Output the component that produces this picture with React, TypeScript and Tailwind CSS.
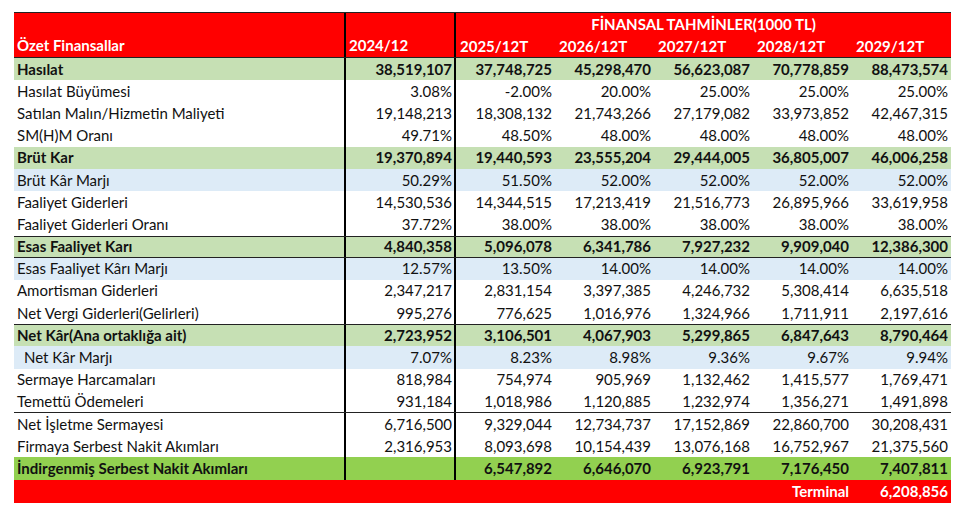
import React from "react"

type Row = {
  label: string
  values: string[]
  kind?: "total" | "ratio" | "fcf"
  indent?: boolean
  borderTop?: boolean
  borderBottom?: boolean
}

const years = ["2025/12T", "2026/12T", "2027/12T", "2028/12T", "2029/12T"]

const rows: Row[] = [
  { label: "Hasılat", kind: "total", values: ["38,519,107", "37,748,725", "45,298,470", "56,623,087", "70,778,859", "88,473,574"] },
  { label: "Hasılat Büyümesi", values: ["3.08%", "-2.00%", "20.00%", "25.00%", "25.00%", "25.00%"] },
  { label: "Satılan Malın/Hizmetin Maliyeti", values: ["19,148,213", "18,308,132", "21,743,266", "27,179,082", "33,973,852", "42,467,315"] },
  { label: "SM(H)M Oranı", values: ["49.71%", "48.50%", "48.00%", "48.00%", "48.00%", "48.00%"] },
  { label: "Brüt Kar", kind: "total", values: ["19,370,894", "19,440,593", "23,555,204", "29,444,005", "36,805,007", "46,006,258"] },
  { label: "Brüt Kâr Marjı", kind: "ratio", values: ["50.29%", "51.50%", "52.00%", "52.00%", "52.00%", "52.00%"] },
  { label: "Faaliyet Giderleri", values: ["14,530,536", "14,344,515", "17,213,419", "21,516,773", "26,895,966", "33,619,958"] },
  { label: "Faaliyet Giderleri Oranı", values: ["37.72%", "38.00%", "38.00%", "38.00%", "38.00%", "38.00%"] },
  { label: "Esas Faaliyet Karı", kind: "total", borderTop: true, borderBottom: true, values: ["4,840,358", "5,096,078", "6,341,786", "7,927,232", "9,909,040", "12,386,300"] },
  { label: "Esas Faaliyet Kârı Marjı", kind: "ratio", values: ["12.57%", "13.50%", "14.00%", "14.00%", "14.00%", "14.00%"] },
  { label: "Amortisman Giderleri", values: ["2,347,217", "2,831,154", "3,397,385", "4,246,732", "5,308,414", "6,635,518"] },
  { label: "Net Vergi Giderleri(Gelirleri)", values: ["995,276", "776,625", "1,016,976", "1,324,966", "1,711,911", "2,197,616"] },
  { label: "Net Kâr(Ana ortaklığa ait)", kind: "total", borderTop: true, values: ["2,723,952", "3,106,501", "4,067,903", "5,299,865", "6,847,643", "8,790,464"] },
  { label: "Net Kâr Marjı", kind: "ratio", indent: true, values: ["7.07%", "8.23%", "8.98%", "9.36%", "9.67%", "9.94%"] },
  { label: "Sermaye Harcamaları", values: ["818,984", "754,974", "905,969", "1,132,462", "1,415,577", "1,769,471"] },
  { label: "Temettü Ödemeleri", borderBottom: true, values: ["931,184", "1,018,986", "1,120,885", "1,232,974", "1,356,271", "1,491,898"] },
  { label: "Net İşletme Sermayesi", values: ["6,716,500", "9,329,044", "12,734,737", "17,152,869", "22,860,700", "30,208,431"] },
  { label: "Firmaya Serbest Nakit Akımları", values: ["2,316,953", "8,093,698", "10,154,439", "13,076,168", "16,752,967", "21,375,560"] },
  { label: "İndirgenmiş Serbest Nakit Akımları", kind: "fcf", values: ["", "6,547,892", "6,646,070", "6,923,791", "7,176,450", "7,407,811"] },
]

const rowBg = (kind?: Row["kind"]) => {
  if (kind === "total") return "bg-[#c6e0b4] font-bold"
  if (kind === "ratio") return "bg-[#ddebf7]"
  if (kind === "fcf") return "bg-[#92d050] font-bold"
  return "bg-white"
}

function DataRow({ row }: { row: Row }) {
  return (
    <div
      className={
        "grid h-[22.2px] grid-cols-[332px_110px_repeat(5,99px)] items-center leading-none " +
        rowBg(row.kind) +
        (row.borderTop ? " border-t border-[#222]" : "") +
        (row.borderBottom ? " border-b border-[#222]" : "")
      }
    >
      <div className={"flex h-full items-center border-r-2 border-black " + (row.indent ? "pl-[10px]" : "pl-[3px]")}>
        {row.label}
      </div>
      <div className="flex h-full items-center justify-end border-r-2 border-black pr-[2px]">{row.values[0]}</div>
      {row.values.slice(1).map((v, i) => (
        <div key={i} className="pr-[3px] text-right">
          {v}
        </div>
      ))}
    </div>
  )
}

export default function App() {
  return (
    <div className="min-h-[509px] bg-white pl-[14px] pt-[12px] text-[15px] text-[#111]" style={{ fontFamily: "Lato, 'Liberation Sans', sans-serif" }}>
      <div className="w-[937px]">
        {/* Header */}
        <div className="grid grid-cols-[332px_110px_repeat(5,99px)] grid-rows-[22px_22px] border-y border-[#222] bg-[#ff0000] font-bold leading-none text-white">
          <div className="row-span-2 flex items-end border-r-2 border-black pb-[4px] pl-[3px]">Özet Finansallar</div>
          <div className="row-span-2 flex items-end border-r-2 border-black pb-[4px] pl-[3px]">2024/12</div>
          <div className="col-span-5 flex items-center justify-center">FİNANSAL TAHMİNLER(1000 TL)</div>
          {years.map((y) => (
            <div key={y} className="flex items-center pl-[4px]">
              {y}
            </div>
          ))}
        </div>

        {rows.map((row) => (
          <DataRow key={row.label} row={row} />
        ))}

        {/* Terminal */}
        <div className="grid h-[23px] grid-cols-[332px_110px_repeat(5,99px)] items-center bg-[#ff0000] font-bold leading-none text-white">
          <div />
          <div />
          <div />
          <div />
          <div />
          <div className="pr-[3px] text-right">Terminal</div>
          <div className="pr-[3px] text-right">6,208,856</div>
        </div>
      </div>
    </div>
  )
}
